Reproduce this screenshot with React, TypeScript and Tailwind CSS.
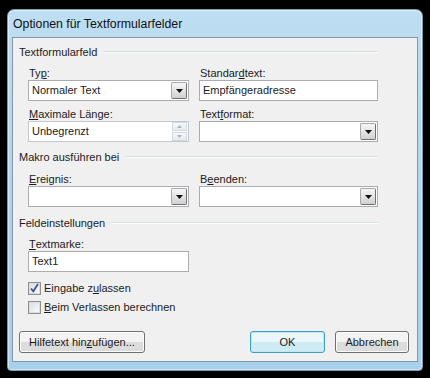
import React from "react";

const DropButton = () => (
  <div className="flex h-[17px] w-[16px] items-center justify-center rounded-[2px] border border-t-[#a9a9a9] border-l-[#a9a9a9] border-r-[#707070] border-b-[#707070] bg-gradient-to-b from-[#f6f6f6] via-[#e4e4e4] to-[#d0d0d0]">
    <svg width="7" height="4" viewBox="0 0 7 4">
      <path d="M0 0h7L3.5 4z" fill="#111" />
    </svg>
  </div>
);

const SpinButtons = () => (
  <div className="flex h-[19px] w-[15px] flex-col">
    <div className="flex h-[9px] items-center justify-center border border-[#d3d8de] bg-gradient-to-b from-[#f7f9fb] to-[#e6ebef]">
      <svg width="5" height="3" viewBox="0 0 5 3">
        <path d="M0 3h5L2.5 0z" fill="#a6b4c3" />
      </svg>
    </div>
    <div className="mt-[1px] flex h-[9px] items-center justify-center border border-[#d3d8de] bg-gradient-to-b from-[#f7f9fb] to-[#e6ebef]">
      <svg width="5" height="3" viewBox="0 0 5 3">
        <path d="M0 0h5L2.5 3z" fill="#a6b4c3" />
      </svg>
    </div>
  </div>
);

const Label = ({ children }: { children: React.ReactNode }) => (
  <div className="flex h-[14px] items-center pl-[1px] leading-none">{children}</div>
);

const GroupHeader = ({ title }: { title: string }) => (
  <div className="flex h-[16px] items-center pl-[6px] pr-[39px]">
    <span className="leading-none">{title}</span>
    <div className="ml-[6px] flex flex-1 flex-col">
      <div className="h-[1px] bg-[#d5dee3]" />
      <div className="h-[1px] bg-[#fbfcfc]" />
    </div>
  </div>
);

const Checkbox = ({ checked, children }: { checked?: boolean; children: React.ReactNode }) => (
  <div className="flex h-[14px] items-center gap-[3px] pl-[15px]">
    <div className="flex h-[13px] w-[13px] items-center justify-center border border-[#8e8f8f] bg-white">
      <div className="relative h-[11px] w-[11px] border border-[#d9dde3] bg-gradient-to-br from-[#dcdfe4] to-[#fbfbfb]">
        {checked && (
          <svg className="absolute -left-[1px] -top-[2px]" width="11" height="12" viewBox="0 0 11 12">
            <path d="M2 6.5 L4.3 9.3 L9 2" fill="none" stroke="#3d5c98" strokeWidth="1.9" />
          </svg>
        )}
      </div>
    </div>
    <span className="leading-none">{children}</span>
  </div>
);

export default function App() {
  return (
    <div className="h-[378px] w-[430px] overflow-hidden bg-black pl-[7px] pt-[9px] font-['Liberation_Sans',Arial,sans-serif] text-[11px] text-[#1b1b1b]">
      <div className="flex h-[362px] w-[416px] flex-col rounded-b-[4px] rounded-t-[7px] border border-[#7f98ad] bg-gradient-to-b from-[#bedef2] via-[#add5ed] to-[#a7d1ea] px-[4px] pb-[8px] shadow-[inset_0_0_0_1px_rgba(255,255,255,0.45)]">
        <div className="flex h-[27px] items-center pl-[1px] pt-[1px] text-[12.3px] text-[#111]">
          Optionen für Textformularfelder
        </div>
        <div className="flex flex-1 flex-col border border-[#8397a9] bg-[#f0f0f0]">
          <div className="h-[6px]" />
          <GroupHeader title="Textformularfeld" />
          <div className="flex gap-[10px] pl-[15px] pt-[6px]">
            <div className="flex w-[161px] flex-col">
              <Label>
                Ty<u>p</u>:
              </Label>
              <div className="flex h-[21px] items-center justify-between border border-[#abadb3] bg-white pl-[3px] pr-[1px]">
                <span>Normaler Text</span>
                <DropButton />
              </div>
              <div className="h-[6px]" />
              <Label>
                <u>M</u>aximale Länge:
              </Label>
              <div className="flex h-[21px] items-center justify-between border border-[#c3c8cf] bg-white pl-[3px] pr-[1px]">
                <span>Unbegrenzt</span>
                <SpinButtons />
              </div>
            </div>
            <div className="flex w-[179px] flex-col">
              <Label>
                Standar<u>d</u>text:
              </Label>
              <div className="flex h-[21px] items-center border border-[#abadb3] bg-white pl-[3px]">
                Empfängeradresse
              </div>
              <div className="h-[6px]" />
              <Label>
                Text<u>f</u>ormat:
              </Label>
              <div className="flex h-[21px] items-center justify-end border border-[#abadb3] bg-white pr-[1px]">
                <DropButton />
              </div>
            </div>
          </div>
          <div className="h-[7px]" />
          <GroupHeader title="Makro ausführen bei" />
          <div className="flex gap-[10px] pl-[15px] pt-[7px]">
            <div className="flex w-[161px] flex-col">
              <Label>
                <u>E</u>reignis:
              </Label>
              <div className="flex h-[21px] items-center justify-end border border-[#abadb3] bg-white pr-[1px]">
                <DropButton />
              </div>
            </div>
            <div className="flex w-[179px] flex-col">
              <Label>
                B<u>e</u>enden:
              </Label>
              <div className="flex h-[21px] items-center justify-end border border-[#abadb3] bg-white pr-[1px]">
                <DropButton />
              </div>
            </div>
          </div>
          <div className="h-[8px]" />
          <GroupHeader title="Feldeinstellungen" />
          <div className="flex flex-col pl-[15px] pt-[6px]">
            <Label>
              <u>T</u>extmarke:
            </Label>
            <div className="flex h-[21px] w-[161px] items-center border border-[#abadb3] bg-white pl-[3px]">
              Text1
            </div>
          </div>
          <div className="h-[9px]" />
          <Checkbox checked>
            Eingabe z<u>u</u>lassen
          </Checkbox>
          <div className="h-[5px]" />
          <Checkbox>
            <u>B</u>eim Verlassen berechnen
          </Checkbox>
          <div className="h-[17px]" />
          <div className="flex items-center pl-[6px] pr-[8px]">
            <button className="flex h-[22px] w-[126px] items-center justify-center rounded-[3px] border border-[#707070] bg-gradient-to-b from-[#f3f3f3] from-50% to-[#dcdcdc] to-50% shadow-[inset_0_0_0_1px_#fcfcfc]">
              Hilfetext hin<u>z</u>ufügen...
            </button>
            <div className="flex-1" />
            <button className="flex h-[22px] w-[75px] items-center justify-center rounded-[3px] border border-[#3c9fbf] bg-gradient-to-b from-[#eaf6fa] from-50% to-[#cfebf3] to-50% shadow-[inset_0_0_0_1px_#bfe9f6]">
              OK
            </button>
            <div className="w-[10px]" />
            <button className="flex h-[22px] w-[74px] items-center justify-center rounded-[3px] border border-[#707070] bg-gradient-to-b from-[#f3f3f3] from-50% to-[#dcdcdc] to-50% shadow-[inset_0_0_0_1px_#fcfcfc]">
              Abbrechen
            </button>
          </div>
        </div>
      </div>
    </div>
  );
}
